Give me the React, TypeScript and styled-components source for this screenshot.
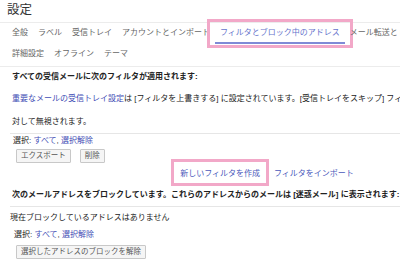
import React from "react";
import styled, { createGlobalStyle } from "styled-components";

const Global = createGlobalStyle`
  html, body { margin: 0; padding: 0; background: #fff; overflow: hidden; }
  body { font-family: "Liberation Sans", "Noto Sans CJK JP", Arial, sans-serif; color: #222; }
  * { box-sizing: border-box; }
`;

const Page = styled.div`
  width: 530px;
  height: 269px;
  background: #fff;
`;

const Title = styled.div`
  height: 23px;
  padding-left: 7px;
  font-size: 12.5px;
  line-height: 21px;
  color: #333;
  border-bottom: 1px solid #ececec;
`;

const Tabs = styled.div`
  padding-left: 7px;
  border-bottom: 1px solid #ececec;
  height: 44px;
`;

const TabRow = styled.div<{ $h: number }>`
  display: flex;
  height: ${(p) => p.$h}px;
  align-items: flex-start;
  white-space: nowrap;
`;

const Tab = styled.div<{ $active?: boolean }>`
  position: relative;
  padding: 0 5px;
  font-size: 8px;
  height: 21px;
  line-height: 19px;
  color: ${(p) => (p.$active ? "#6674cc" : "#666")};
  border-bottom: 2px solid ${(p) => (p.$active ? "#7f8ad6" : "transparent")};
`;

const Highlight = styled.div<{ $t: number; $r: number; $b: number; $l: number }>`
  position: absolute;
  top: ${(p) => p.$t}px;
  right: ${(p) => p.$r}px;
  bottom: ${(p) => p.$b}px;
  left: ${(p) => p.$l}px;
  border: 3px solid #f2a8c8;
  pointer-events: none;
`;

const Content = styled.div`
  padding: 0 6px 0 10px;
`;

const Heading = styled.div<{ $h: number; $mt?: number }>`
  height: ${(p) => p.$h}px;
  line-height: ${(p) => p.$h}px;
  margin-top: ${(p) => p.$mt ?? 0}px;
  padding-left: 2px;
  font-size: 8px;
  font-weight: bold;
  color: #222;
  white-space: nowrap;
`;

const Line = styled.div<{ $h: number; $pl?: number }>`
  height: ${(p) => p.$h}px;
  line-height: ${(p) => p.$h}px;
  padding-left: ${(p) => p.$pl ?? 2}px;
  font-size: 8px;
  color: #222;
  white-space: nowrap;
`;

const Link = styled.span`
  color: #3f4db5;
`;

const Divider = styled.div`
  height: 1px;
  background: #e6e6e6;
`;

const ButtonRow = styled.div<{ $mt: number }>`
  display: flex;
  gap: 9px;
  margin-top: ${(p) => p.$mt}px;
  padding-left: 6px;
`;

const Button = styled.div`
  height: 14px;
  padding: 0 4px;
  font-size: 7.5px;
  line-height: 12px;
  color: #555;
  background: #f5f5f5;
  border: 1px solid #c8c8c8;
  border-radius: 1px;
  white-space: nowrap;
`;

const Actions = styled.div`
  display: flex;
  justify-content: center;
  gap: 14px;
  margin-top: 5px;
  height: 12px;
  font-size: 8px;
  line-height: 12px;
  white-space: nowrap;
`;

const Action = styled.span`
  position: relative;
  color: #4a58bb;
`;

export default function App() {
  return (
    <Page>
      <Global />
      <Title>設定</Title>
      <Tabs>
        <TabRow $h={21}>
          <Tab>全般</Tab>
          <Tab>ラベル</Tab>
          <Tab>受信トレイ</Tab>
          <Tab>アカウントとインポート</Tab>
          <Tab $active>
            フィルタとブロック中のアドレス
            <Highlight $t={-4} $r={-8} $b={-6} $l={-8} />
          </Tab>
          <Tab>メール転送と POP/IMAP</Tab>
          <Tab>アドオン</Tab>
        </TabRow>
        <TabRow $h={23}>
          <Tab>詳細設定</Tab>
          <Tab>オフライン</Tab>
          <Tab>テーマ</Tab>
        </TabRow>
      </Tabs>
      <Content>
        <Heading $h={20}>すべての受信メールに次のフィルタが適用されます:</Heading>
        <Line $h={24}>
          <Link>重要なメールの受信トレイ設定</Link>は [フィルタを上書きする] に設定されています。[受信トレイをスキップ] フィルタは、重要なマーク付きのメールに
        </Line>
        <Line $h={22}>対して無視されます。</Line>
        <Divider />
        <Line $h={14} $pl={3}>
          選択: <Link>すべて</Link>, <Link>選択解除</Link>
        </Line>
        <ButtonRow $mt={1}>
          <Button>エクスポート</Button>
          <Button>削除</Button>
        </ButtonRow>
        <Actions>
          <Action>
            新しいフィルタを作成
            <Highlight $t={-9} $r={-9} $b={-6} $l={-9} />
          </Action>
          <Action>フィルタをインポート</Action>
        </Actions>
        <Heading $h={22} $mt={4}>
          次のメールアドレスをブロックしています。これらのアドレスからのメールは [迷惑メール] に表示されます:
        </Heading>
        <Divider />
        <Line $h={22} $pl={0}>現在ブロックしているアドレスはありません</Line>
        <Line $h={12} $pl={4}>
          選択: <Link>すべて</Link>, <Link>選択解除</Link>
        </Line>
        <ButtonRow $mt={4}>
          <Button>選択したアドレスのブロックを解除</Button>
        </ButtonRow>
      </Content>
    </Page>
  );
}
